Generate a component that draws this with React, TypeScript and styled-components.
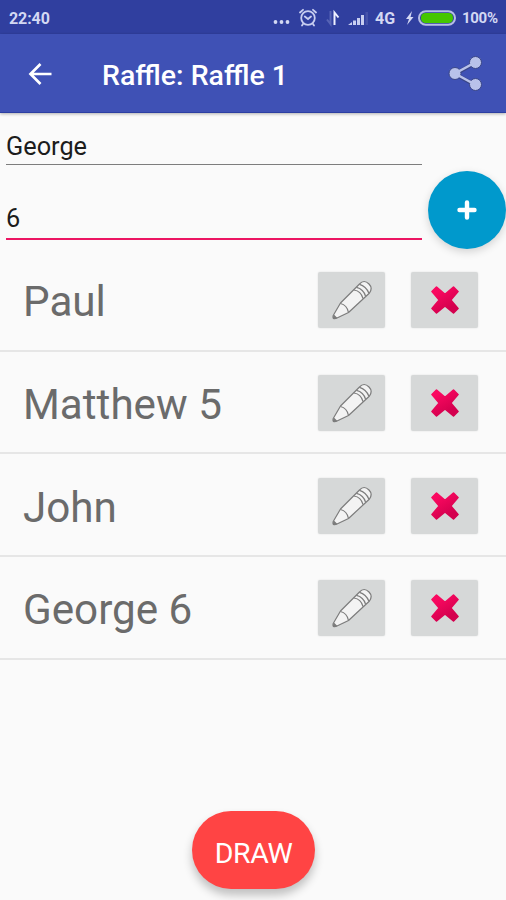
import React from 'react';
import styled, { createGlobalStyle } from 'styled-components';

const GlobalStyle = createGlobalStyle`
  * { box-sizing: border-box; }
  body { margin: 0; background: #fafafa; font-family: Roboto, sans-serif; overflow: hidden; }
  button, input { font: inherit; border: 0; padding: 0; margin: 0; border-radius: 0; outline: 0; }
`;

const Screen = styled.main`
  width: 506px;
  height: 900px;
  display: flex;
  flex-direction: column;
  background: #fafafa;
  overflow: hidden;
`;

const StatusBar = styled.div`
  height: 34px;
  flex: none;
  display: flex;
  align-items: center;
  justify-content: space-between;
  padding: 2px 8px 0 9px;
  background: #303f9f;
  color: #d3d8f3;
  font-size: 16px;
  font-weight: 700;
`;

const Clock = styled.span`
  letter-spacing: -0.1px;
`;

const StatusItems = styled.div`
  display: flex;
  align-items: center;
  height: 32px;
`;

const StatusIcon = styled.svg<{ $gap: number }>`
  display: block;
  flex: none;
  margin-right: ${(p) => p.$gap}px;
`;

const Network = styled.span`
  width: 21px;
  margin-right: 9px;
  font-size: 16px;
`;

const Percent = styled.span`
  width: 36px;
  font-size: 15px;
  letter-spacing: -0.3px;
  white-space: nowrap;
`;

const Toolbar = styled.header`
  height: 79px;
  flex: none;
  display: flex;
  align-items: center;
  padding: 1px 22px 0 26px;
  background: #3f51b5;
  border-bottom: 1px solid #2c3fa2;
  box-shadow: 0 1px 3px rgba(0, 0, 0, 0.3);
  z-index: 1;
`;

const IconButton = styled.button`
  display: flex;
  background: none;
`;

const Title = styled.h1`
  flex: 1;
  margin: 4px 0 0 50px;
  color: #fff;
  font-size: 28.5px;
  line-height: 32px;
  font-weight: 500;
  letter-spacing: 0;
  white-space: nowrap;
`;

const Form = styled.form`
  height: 136px;
  flex: none;
  display: flex;
  justify-content: space-between;
  padding-left: 6px;
`;

const Fields = styled.div`
  width: 416px;
  display: flex;
  flex-direction: column;
`;

const Field = styled.input<{ $active?: boolean }>`
  width: 100%;
  height: ${(p) => (p.$active ? 41 : 36)}px;
  margin-top: ${(p) => (p.$active ? 34 : 16)}px;
  padding: 0;
  background: none;
  color: #1c1c1c;
  font-size: 25.3px;
  border-bottom: ${(p) => (p.$active ? '2px solid #ec1562' : '1px solid #7d7d7d')};
`;

const AddButton = styled.button`
  width: 78px;
  height: 78px;
  margin-top: 58px;
  display: flex;
  align-items: center;
  justify-content: center;
  border-radius: 50%;
  background: #0099cc;
  box-shadow: 0 3px 8px rgba(0, 0, 0, 0.16);
`;

const List = styled.ul`
  height: 410.7px;
  margin: 0;
  padding: 0;
  list-style: none;
  display: grid;
  grid-template-rows: repeat(4, 1fr);
`;

const Row = styled.li`
  display: flex;
  align-items: center;
  gap: 26px;
  padding: 2px 27.6px 0 23px;
  border-bottom: 2px solid #e6e6e6;
`;

const Name = styled.span`
  flex: 1;
  padding-top: 4px;
  color: #6b6b6b;
  font-size: 42.2px;
  line-height: 50px;
  white-space: nowrap;
`;

const ActionButton = styled.button`
  width: 67px;
  height: 56px;
  display: flex;
  align-items: center;
  justify-content: center;
  border-radius: 2px;
  background: #d6d8d8;
  box-shadow: 0 0 2px rgba(0, 0, 0, 0.12);
`;

const DrawButton = styled.button`
  width: 123px;
  height: 78px;
  margin: auto 0 11px 192px;
  padding-top: 7px;
  border-radius: 39px;
  background: #ff4444;
  color: #fff;
  font-size: 28.5px;
  letter-spacing: -0.4px;
  box-shadow: 0 6px 10px rgba(0, 0, 0, 0.24);
`;

const Pencil = () => (
  <svg width="40" height="40" viewBox="0 0 40 40" fill="#f3f3f3" stroke="#7c7c7c" strokeWidth="1.2" strokeLinejoin="round">
    <path d="M1.5 38.5 Q0.5 37 1.5 35 L8.5 23 L27.5 4 Q32 -1 37 4 Q41 8 37.5 13 L16.5 32.5 L5 38 Q3 39 1.5 38.5 Z" />
    <path d="M8.5 23.5 Q15 25 16.5 32.5 M22 10 Q29 11 31 18.5 M24.5 7.3 Q31.5 9 33.5 16 M27.5 4.3 Q34 6 36.8 13" fill="none" />
    <path d="M1.5 38.5 L2 35.5 L4.5 38 Z" fill="#7c7c7c" />
  </svg>
);

const Cross = () => (
  <svg width="28" height="28" viewBox="0 0 28 28">
    <defs>
      <linearGradient id="crossFill" x1="0" y1="0" x2="0.6" y2="1">
        <stop offset="0.2" stopColor="#fa0860" />
        <stop offset="0.9" stopColor="#d4004e" />
      </linearGradient>
    </defs>
    <path
      d="M5.5 1 L14 8.4 L22.5 1 L27 5.5 L19.8 14 L27 22.5 L22.5 27 L14 19.8 L5.5 27 L1 22.5 L8.2 14 L1 5.5 Z"
      fill="url(#crossFill)" stroke="url(#crossFill)" strokeWidth="1.6" strokeLinejoin="round"
    />
  </svg>
);

const entries = ['Paul', 'Matthew 5', 'John', 'George 6'];

export default function App() {
  return (
    <Screen>
      <GlobalStyle />
      <StatusBar>
        <Clock>22:40</Clock>
        <StatusItems>
          <StatusIcon $gap={9} width="17" height="20" viewBox="0 0 17 20" fill="#d3d8f3">
            <circle cx="2.5" cy="14" r="1.9" /><circle cx="8.5" cy="14" r="1.9" /><circle cx="14.5" cy="14" r="1.9" />
          </StatusIcon>
          <StatusIcon $gap={9} width="18" height="20" viewBox="0 0 18 20" fill="none" stroke="#c8cef0" strokeWidth="1.8" strokeLinecap="round">
            <circle cx="9" cy="10" r="6.8" />
            <path d="M1 4.5 L4 1.8 M17 4.5 L14 1.8 M5.8 8.5 L9 11 L12 8.5 M4 16 L3 17.5 M14 16 L15 17.5" />
          </StatusIcon>
          <StatusIcon $gap={8} width="14" height="20" viewBox="0 0 14 20" fill="none" strokeWidth="2">
            <path d="M4.5 3 V16 L1 11.5" stroke="#5764b5" />
            <path d="M8.5 17 V4.5 L12.5 9.5" stroke="#eef0ff" />
          </StatusIcon>
          <StatusIcon $gap={7} width="20" height="20" viewBox="0 0 20 20" fill="#c8cef0">
            <path d="M0 17 L4 14 V17 Z M5 12.5 H8 V17 H5 Z M9 10 H12 V17 H9 Z M13 7 H16 V17 H13 Z" />
            <path d="M17.5 4 H20 V17 H17.5 Z" fill="#4653aa" />
          </StatusIcon>
          <Network>4G</Network>
          <StatusIcon $gap={4} width="9" height="16" viewBox="0 0 9 16" fill="#d3d8f3">
            <path d="M7 1 L1 9 H4 L2 15 L8.5 7 H5.5 Z" />
          </StatusIcon>
          <StatusIcon $gap={6} width="38" height="16" viewBox="0 0 38 16">
            <rect x="1" y="1.2" width="36" height="13.6" rx="6.8" fill="#303f9f" stroke="#b7bde5" strokeWidth="2" />
            <rect x="3" y="3" width="32" height="10" rx="4.5" fill="#45c600" />
          </StatusIcon>
          <Percent>100%</Percent>
        </StatusItems>
      </StatusBar>
      <Toolbar>
        <IconButton aria-label="Back">
          <svg width="26" height="26" viewBox="0 0 26 26" fill="none" stroke="#fff" strokeWidth="2.7">
            <path d="M25.5 13 H4 M14.5 3 L4.5 13 L14.5 23" />
          </svg>
        </IconButton>
        <Title>Raffle: Raffle 1</Title>
        <IconButton aria-label="Share">
          <svg width="36" height="36" viewBox="0 0 36 36">
            <g fill="#b9c2ea" stroke="#3a4687" strokeWidth="1">
              <path d="M27 7 L7 18 L27 29" fill="none" stroke="#3a4687" strokeWidth="4" />
              <circle cx="27.5" cy="6.5" r="6" /><circle cx="7" cy="17.5" r="6" /><circle cx="27.5" cy="28.5" r="6" />
            </g>
            <path d="M27 6.5 L7 17.5 L27 28.5" fill="none" stroke="#b9c2ea" strokeWidth="2.5" />
          </svg>
        </IconButton>
      </Toolbar>
      <Form onSubmit={(e) => e.preventDefault()}>
        <Fields>
          <Field aria-label="Name" defaultValue="George" />
          <Field aria-label="Tickets" defaultValue="6" $active />
        </Fields>
        <AddButton aria-label="Add">
          <svg width="20" height="20" viewBox="0 0 20 20" stroke="#fff" strokeWidth="4.4" strokeLinecap="round">
            <path d="M10 2.5 V17.5 M2.5 10 H17.5" />
          </svg>
        </AddButton>
      </Form>
      <List>
        {entries.map((name) => (
          <Row key={name}>
            <Name>{name}</Name>
            <ActionButton aria-label={`Edit ${name}`}><Pencil /></ActionButton>
            <ActionButton aria-label={`Delete ${name}`}><Cross /></ActionButton>
          </Row>
        ))}
      </List>
      <DrawButton>DRAW</DrawButton>
    </Screen>
  );
}
